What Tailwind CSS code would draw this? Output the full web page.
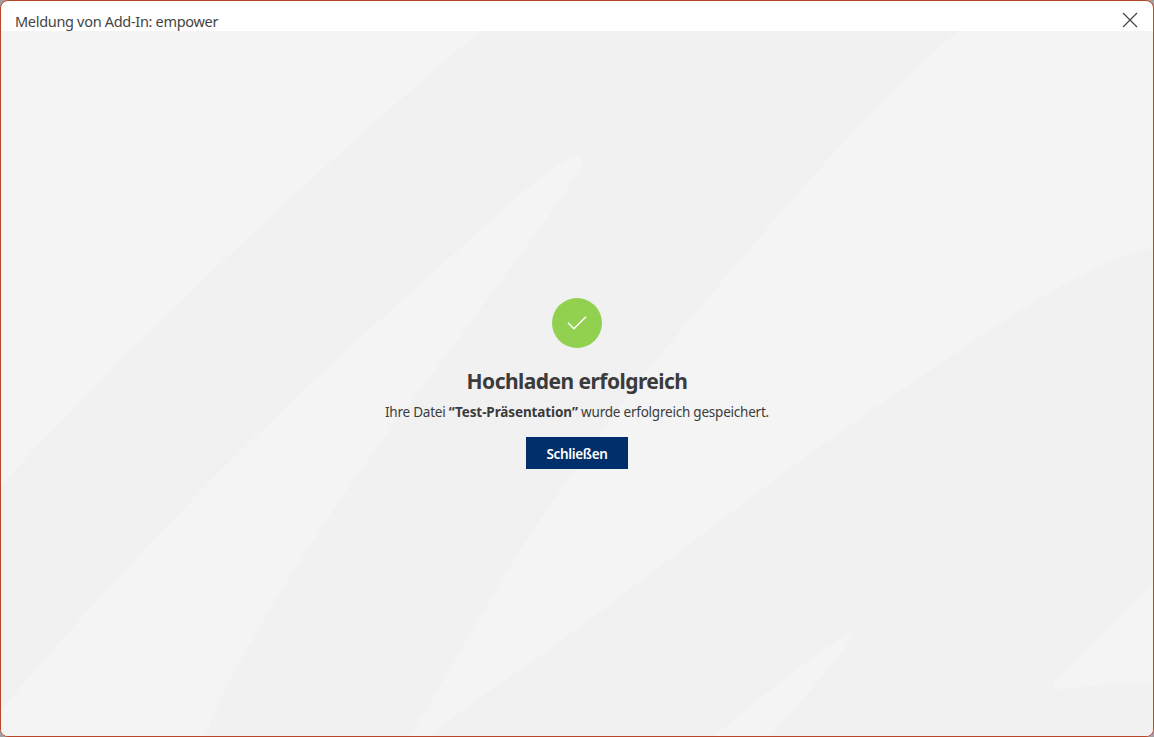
<!DOCTYPE html>
<html lang="de">
<head>
  <meta charset="UTF-8" />
  <meta name="viewport" content="width=device-width, initial-scale=1.0" />
  <title>Meldung von Add-In: empower</title>
  <script src="https://cdn.jsdelivr.net/npm/@tailwindcss/browser@4"></script>
</head>

<body class="bg-[#a0a0a0] font-['Noto_Sans',sans-serif] text-[#3b3b3b]">
  <div class="h-screen w-screen flex flex-col overflow-hidden rounded-lg border border-[#b7472a] bg-white">
    <header class="h-[30px] shrink-0 flex items-start justify-between pl-3.5 pr-[15px]">
      <h1 class="pt-2.5 text-[14.5px] leading-5 tracking-[-0.31px] text-[#444] whitespace-nowrap">Meldung von Add-In: empower</h1>
      <button class="mt-[11px]" aria-label="Schließen">
        <svg class="size-4" viewBox="0 0 16 16" fill="none" stroke="#444" stroke-width="1.2">
          <path d="M1 1l14 14M15 1L1 15" />
        </svg>
      </button>
    </header>

    <main class="relative grow flex flex-col items-center bg-[#f1f1f1]">
      <!-- Hintergrund -->
      <svg class="absolute inset-0 size-full" viewBox="1 31 1152 705" preserveAspectRatio="none" fill="#f4f4f4">
        <path d="M0 31H480C330 158 150 323 0 486Z" />
        <path d="M0 711C120 570 250 435 400 302C455 255 530 180 567 160Q582 151 582 163C578 180 515 260 465 330C420 390 380 441 340 500C290 575 229 670 205 737H0Z" />
        <path d="M958 31H1154V248C1090 256 980 337 840 432C740 503 640 584 530 663C500 684 460 710 430 737H409C455 665 490 595 530 535C590 445 650 363 715 290C790 202 870 106 958 31Z" />
        <path d="M713 737C745 710 780 682 810 660Q850 631 853 632C857 636 815 687 769 737Z" />
        <path d="M1154 581L1056 681Q1049 690 1060 689C1095 686 1120 683 1154 683Z" />
      </svg>

      <div class="relative flex flex-col items-center pt-[267px] whitespace-nowrap">
        <div class="size-[50px] rounded-full bg-[#92d050] flex items-center justify-center">
          <svg class="size-5" viewBox="0 0 20 20" fill="none" stroke="#fff" stroke-width="1.5">
            <path d="M1 9.7l5.9 6L19 3.7" />
          </svg>
        </div>
        <h2 class="mt-[18px] text-[21px] leading-[30px] font-bold tracking-[-0.55px]">Hochladen erfolgreich</h2>
        <p class="mt-[6px] text-[13.5px] leading-5 tracking-[-0.22px]">Ihre Datei <b class="tracking-[-0.1px]">“Test-Präsentation”</b> wurde erfolgreich gespeichert.</p>
        <button class="mt-[15px] h-8 w-[102px] pt-0.5 bg-[#002f6c] text-white text-[13.5px] font-semibold tracking-[-0.32px]">Schließen</button>
      </div>
    </main>
  </div>
</body>
</html>
